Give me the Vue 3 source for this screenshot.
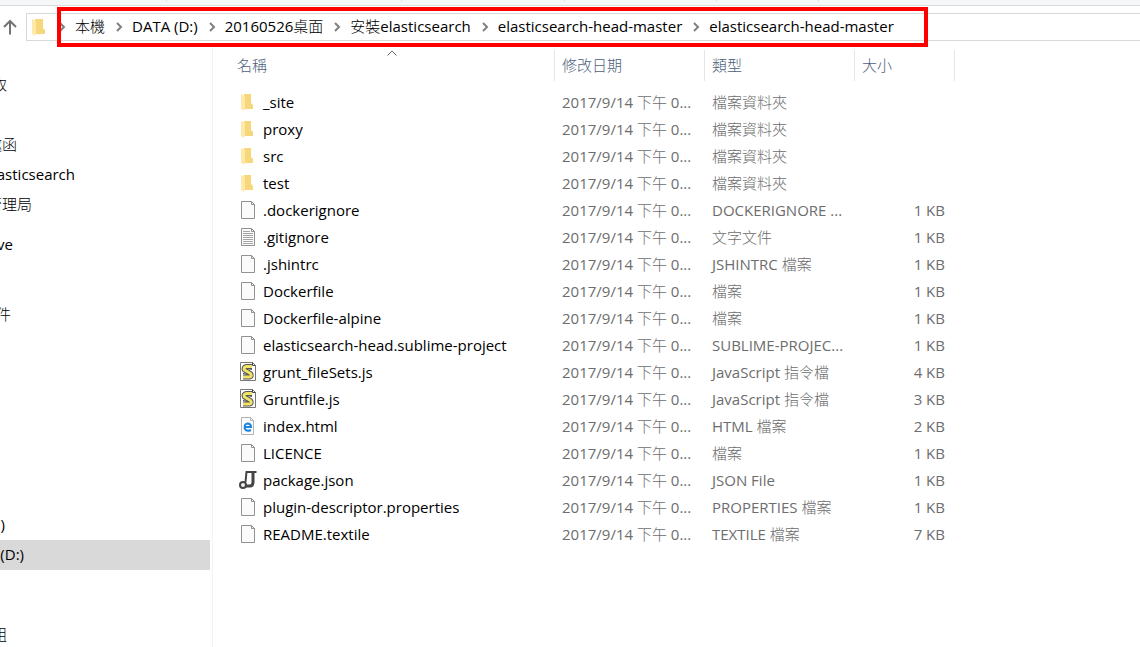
<template>
  <div class="explorer">
    <div class="ribbon">
      <span v-for="width in ribbonGroups" :key="width" class="ribbon__group" :style="{ width: `${width}px` }"></span>
    </div>

    <header class="toolbar">
      <button class="up-button" type="button" aria-label="上移一層">
        <svg width="16" height="16" viewBox="0 0 16 16" fill="none" stroke="#737373" stroke-width="2">
          <path d="M8 15.5V2M2 8l6-6 6 6" />
        </svg>
      </button>
      <div class="address">
        <svg class="address__icon" width="16" height="20" viewBox="0 0 16 20">
          <path d="M4 2h8v9l2 2v4H5z" fill="#f7d77c" />
          <path d="M1 2l4 2v12l-1 3-3-2z" fill="#ffe9a9" />
        </svg>
        <nav class="crumbs" aria-label="路徑">
          <template v-for="(crumb, i) in crumbs" :key="i">
            <svg class="crumbs__sep" width="8" height="10" viewBox="0 0 8 10" fill="none" stroke="#808080" stroke-width="2">
              <path d="M2 1l4 4-4 4" />
            </svg>
            <a class="crumbs__link" href="#">{{ crumb }}</a>
          </template>
          <span class="highlight"></span>
        </nav>
      </div>
    </header>

    <div class="content">
      <aside class="sidebar">
        <ul v-for="(group, g) in places" :key="g" class="sidebar__group">
          <li
            v-for="(place, p) in group"
            :key="p"
            class="place"
            :class="{ 'place--selected': place.selected }"
          >
            <span v-if="place.name" class="place__label" :style="{ width: `${place.visible}px` }">{{ place.name }}</span>
          </li>
        </ul>
      </aside>

      <main class="files">
        <table class="file-table">
          <colgroup>
            <col class="col-name" />
            <col class="col-date" />
            <col class="col-type" />
            <col class="col-size" />
          </colgroup>
          <thead>
            <tr>
              <th scope="col" class="name-head" aria-sort="ascending">
                名稱
                <svg class="sort-arrow" width="10" height="6" viewBox="0 0 10 6" fill="none" stroke="#6d6d6d">
                  <path d="M.5 5.5 5 1l4.5 4.5" />
                </svg>
              </th>
              <th scope="col">修改日期</th>
              <th scope="col">類型</th>
              <th scope="col">大小</th>
            </tr>
          </thead>
          <tbody>
            <tr v-for="file in files" :key="file.name">
              <td>
                <div class="file-name">
                  <svg class="file-icon" width="18" height="20" viewBox="0 0 18 20">
                    <template v-if="file.icon === 'folder'">
                      <path d="M5 2h7v9l2 2v4H5z" fill="#f7d77c" />
                      <path d="M2 2l4 2v12l-1 3-3-2z" fill="#ffe9a9" />
                    </template>
                    <template v-else-if="file.icon === 'script'">
                      <path d="M1.5.5h12l3 3v15h-15z" fill="#fff" stroke="#777" />
                      <path d="M13.5.5v3h3" fill="none" stroke="#444" />
                      <path d="M13 4.5H7.500Q4 5 5.500 8l6 3.500q2 3-1 3.500H4" fill="none" stroke="#555" stroke-width="5" />
                      <path d="M13 4.500H7.500Q4 5 5.500 8l6 3.500q2 3-1 3.500H4" fill="none" stroke="#f0e468" stroke-width="3" />
                      <path d="M8 6.500l5 1M4 11.500l5 1" stroke="#555" />
                    </template>
                    <template v-else-if="file.icon === 'html'">
                      <path d="M2.5 1.500h9l3 3v14h-12z" fill="#fbfbfb" stroke="#b4b4b4" />
                      <path d="M11.5 1.500v3h3" fill="none" stroke="#b4b4b4" />
                      <path
                        d="M12 14Q7.500 16 5.800 12.800 5 8 8.500 7.500q3.500 0 3.500 3.500H6.500"
                        fill="none"
                        stroke="#1a86e0"
                        stroke-width="2"
                      />
                    </template>
                    <template v-else-if="file.icon === 'json'">
                      <path d="M17.500 2H7.500L6.500 12" fill="none" stroke="#444" stroke-width="2" />
                      <path d="M14 2v10q0 4-3 4H7" fill="none" stroke="#444" stroke-width="3" />
                      <circle cx="4" cy="15" r="3" fill="#eee" stroke="#444" stroke-width="2" />
                    </template>
                    <template v-else>
                      <path d="M2.5 1.5h10l3 3v14h-13z" fill="#fbfbfb" stroke="#919191" />
                      <path d="M12.5 1.5v3h3" fill="none" stroke="#919191" />
                      <path v-if="file.icon === 'text'" d="M4 4.5h7M4 6.5h10M4 8.5h10M4 10.5h10M4 12.5h10M4 14.5h10M4 16.5h10" stroke="#a5a5a5" />
                    </template>
                  </svg>
                  <span>{{ file.name }}</span>
                </div>
              </td>
              <td>{{ modified }}</td>
              <td>{{ file.type }}</td>
              <td class="size">{{ file.size }}</td>
            </tr>
          </tbody>
        </table>
      </main>
    </div>
  </div>
</template>

<script setup>
const ribbonGroups = [167, 235, 163, 152, 102];

const crumbs = [
  "本機",
  "DATA (D:)",
  "20160526桌面",
  "安裝elasticsearch",
  "elasticsearch-head-master",
  "elasticsearch-head-master",
];

// visible: how much of the label still shows at the pane's left edge,
// an empty entry is a place whose label is scrolled out completely
const places = [
  [
    { name: "取", visible: 7 },
    {},
    { name: "邀函", visible: 17 },
    { name: "asticsearch", visible: 75 },
    { name: "管理局", visible: 32 },
  ],
  [{ name: "ve", visible: 13 }],
  [
    {},
    { name: "件", visible: 11 },
    {},
    {},
    {},
    {},
    {},
    {},
    { name: ")", visible: 5 },
    { name: "(D:)", visible: 24, selected: true },
  ],
  [{}],
  [{ name: "組", visible: 7 }],
];

const modified = "2017/9/14 下午 0...";

const files = [
  { name: "_site", icon: "folder", type: "檔案資料夾", size: "" },
  { name: "proxy", icon: "folder", type: "檔案資料夾", size: "" },
  { name: "src", icon: "folder", type: "檔案資料夾", size: "" },
  { name: "test", icon: "folder", type: "檔案資料夾", size: "" },
  { name: ".dockerignore", icon: "file", type: "DOCKERIGNORE ...", size: "1 KB" },
  { name: ".gitignore", icon: "text", type: "文字文件", size: "1 KB" },
  { name: ".jshintrc", icon: "file", type: "JSHINTRC 檔案", size: "1 KB" },
  { name: "Dockerfile", icon: "file", type: "檔案", size: "1 KB" },
  { name: "Dockerfile-alpine", icon: "file", type: "檔案", size: "1 KB" },
  { name: "elasticsearch-head.sublime-project", icon: "file", type: "SUBLIME-PROJEC...", size: "1 KB" },
  { name: "grunt_fileSets.js", icon: "script", type: "JavaScript 指令檔", size: "4 KB" },
  { name: "Gruntfile.js", icon: "script", type: "JavaScript 指令檔", size: "3 KB" },
  { name: "index.html", icon: "html", type: "HTML 檔案", size: "2 KB" },
  { name: "LICENCE", icon: "file", type: "檔案", size: "1 KB" },
  { name: "package.json", icon: "json", type: "JSON File", size: "1 KB" },
  { name: "plugin-descriptor.properties", icon: "file", type: "PROPERTIES 檔案", size: "1 KB" },
  { name: "README.textile", icon: "file", type: "TEXTILE 檔案", size: "7 KB" },
];
</script>

<style>
body {
  margin: 0;
  background: #fff;
}
</style>

<style scoped>
.explorer {
  display: flex;
  flex-direction: column;
  height: 100vh;
  overflow: hidden;
  font-family: "Open Sans", "Noto Sans CJK TC Light", "Noto Sans CJK TC", sans-serif;
  font-size: 15px;
  line-height: 20px;
  color: #000;
}

.ribbon {
  display: flex;
  flex-shrink: 0;
  height: 5px;
  background: #f5f6f7;
  border-bottom: 1px solid #dadbdc;
}

.ribbon__group {
  box-sizing: border-box;
  height: 2px;
  border-right: 1px solid #e2e3e4;
}

.toolbar {
  display: flex;
  flex-shrink: 0;
  align-items: center;
  height: 28px;
  padding: 7px 0 6px;
}

.up-button {
  display: flex;
  flex-shrink: 0;
  width: 26px;
  padding: 0 0 0 2px;
  border: 0;
  background: none;
}

.address {
  display: flex;
  flex: 1;
  align-items: center;
  height: 26px;
  border: 1px solid #d9d9d9;
  border-right: 0;
}

.address__icon {
  margin: 0 11px 0 4px;
}

.crumbs {
  position: relative;
  display: flex;
  align-items: center;
  white-space: nowrap;
}

.crumbs__sep {
  margin-right: 9px;
}

.crumbs__link {
  margin-right: 10px;
  padding-bottom: 2px;
  color: #000;
  text-decoration: none;
}

/* red frame drawn over the whole path */
.highlight {
  position: absolute;
  inset: -9px -24px -9px -1px;
  border: 4px solid #f00;
}

.content {
  display: flex;
  flex: 1;
  min-height: 0;
}

.sidebar {
  flex-shrink: 0;
  width: 210px;
  padding: 23px 2px 0 0;
  border-right: 1px solid #f2f2f2;
}

.sidebar__group {
  margin: 0 0 10px;
  padding: 0;
  list-style: none;
}

.place {
  display: flex;
  align-items: center;
  height: 30px;
}

.place--selected {
  background: #d9d9d9;
}

.place__label {
  display: flex;
  justify-content: flex-end;
  padding-bottom: 2px;
  overflow: hidden;
  white-space: nowrap;
}

.files {
  flex: 1;
  padding-top: 3px;
}

.file-table {
  width: 742px;
  table-layout: fixed;
  border-collapse: separate;
  border-spacing: 0;
  color: #6d6d6d;
  white-space: nowrap;
}

.col-name {
  width: 342px;
}

.col-date,
.col-type {
  width: 150px;
}

.col-size {
  width: 100px;
}

th {
  box-sizing: border-box;
  height: 31px;
  padding: 0 0 2px 7px;
  border-right: 1px solid #e5e5e5;
  color: #4c607a;
  font-weight: 400;
  text-align: left;
}

.name-head {
  position: relative;
  padding-left: 24px;
}

.sort-arrow {
  position: absolute;
  top: 0;
  left: 174px;
}

tbody::before {
  content: "";
  display: block;
  height: 8px;
}

td {
  box-sizing: border-box;
  height: 27px;
  padding: 0 0 2px 7px;
}

.file-name {
  display: flex;
  align-items: center;
  gap: 6px;
  padding-left: 19px;
  color: #000;
}

.file-icon {
  flex-shrink: 0;
}

td.size {
  padding-right: 10px;
  text-align: right;
}
</style>
